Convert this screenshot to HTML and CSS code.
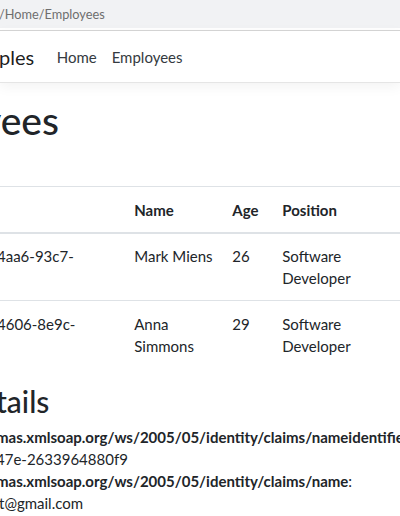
FILE: index.html
```html
<!DOCTYPE html>
<html>
<head>
  <title>Employees</title>
  <meta name="viewport" content="width=device-width, initial-scale=1">
  <link rel="stylesheet" href="styles.css">
</head>
<body>
  <div class="urlbar">/Home/Employees</div>

  <header class="navbar">
    <a class="brand" href="#">ples</a>
    <nav class="nav">
      <a class="nav-link" href="#">Home</a>
      <a class="nav-link" href="#">Employees</a>
    </nav>
  </header>

  <main class="content">
    <h1>yees</h1>
    <div class="spacer"></div>

    <table class="table">
      <colgroup>
        <col class="col-id">
        <col class="col-name">
        <col class="col-age">
        <col class="col-pos">
        <col class="col-act">
      </colgroup>
      <thead>
        <tr>
          <th></th>
          <th>Name</th>
          <th>Age</th>
          <th>Position</th>
          <th></th>
        </tr>
      </thead>
      <tbody>
        <tr>
          <td class="id">4aa6-93c7-</td>
          <td>Mark Miens</td>
          <td>26</td>
          <td>Software Developer</td>
          <td></td>
        </tr>
        <tr>
          <td class="id">4606-8e9c-</td>
          <td>Anna Simmons</td>
          <td>29</td>
          <td>Software Developer</td>
          <td></td>
        </tr>
      </tbody>
    </table>

    <h2>tails</h2>
    <div class="claims">
      <div><strong>mas.xmlsoap.org/ws/2005/05/identity/claims/nameidentifier</strong>:</div>
      <div>47e-2633964880f9</div>
      <div><strong>mas.xmlsoap.org/ws/2005/05/identity/claims/name</strong>:</div>
      <div class="mail">t@gmail.com</div>
    </div>
  </main>
</body>
</html>
```

FILE: styles.css
```css
* {padding: 0; margin: 0; box-sizing: border-box;}
html {font-family: Lato, "Open Sans", Arial, sans-serif; font-size: 15px;}

body {margin: 0; color: #212529; line-height: 22px; overflow: hidden; background: #fff;}

a {text-decoration: none;}

.urlbar {height: 28px; line-height: 28px; margin-bottom: 2px; background-color: #f1f2f4; color: #6e6e6e; font-size: 12.75px; text-indent: -1px; white-space: nowrap;}

.navbar {display: flex; align-items: center; height: 53px; border-top: 1px solid #d3d3d3; border-bottom: 1px solid #e5e5e5; box-shadow: 0 4px 12px rgba(0, 0, 0, .05); padding: 7.5px 0;}

.brand {font-size: 20px; line-height: 28px; color: rgba(0, 0, 0, .9); margin-right: 15px; text-indent: -1px;}

.nav {display: flex;}

.nav-link {padding: 7.5px; color: #343a40;}

.content {padding-top: 14px; white-space: nowrap;}

h1 {font-size: 39px; font-weight: 500; line-height: 1.2; margin-bottom: 7.5px; text-indent: -19px;}

.spacer {height: 35px;}

.table {border-collapse: collapse; table-layout: fixed; width: 470px; margin-bottom: 15px;}

.col-id {width: 123px;}
.col-name {width: 98px;}
.col-age {width: 50px;}
.col-pos {width: 112px;}

.table th, .table td {padding: 11.25px 3px 11.25px 11.25px; text-align: left; vertical-align: top; border-top: 1px solid #dee2e6; white-space: normal;}

.table th {font-weight: bold; border-bottom: 2px solid #dee2e6;}

.table td.id {padding-left: 0; text-indent: -3px;}

h2 {font-size: 30px; font-weight: 500; line-height: 1.2; margin-bottom: 7px; text-indent: -4px;}

.claims div {text-indent: -4px;}

.claims .mail {text-indent: -1px;}
```
